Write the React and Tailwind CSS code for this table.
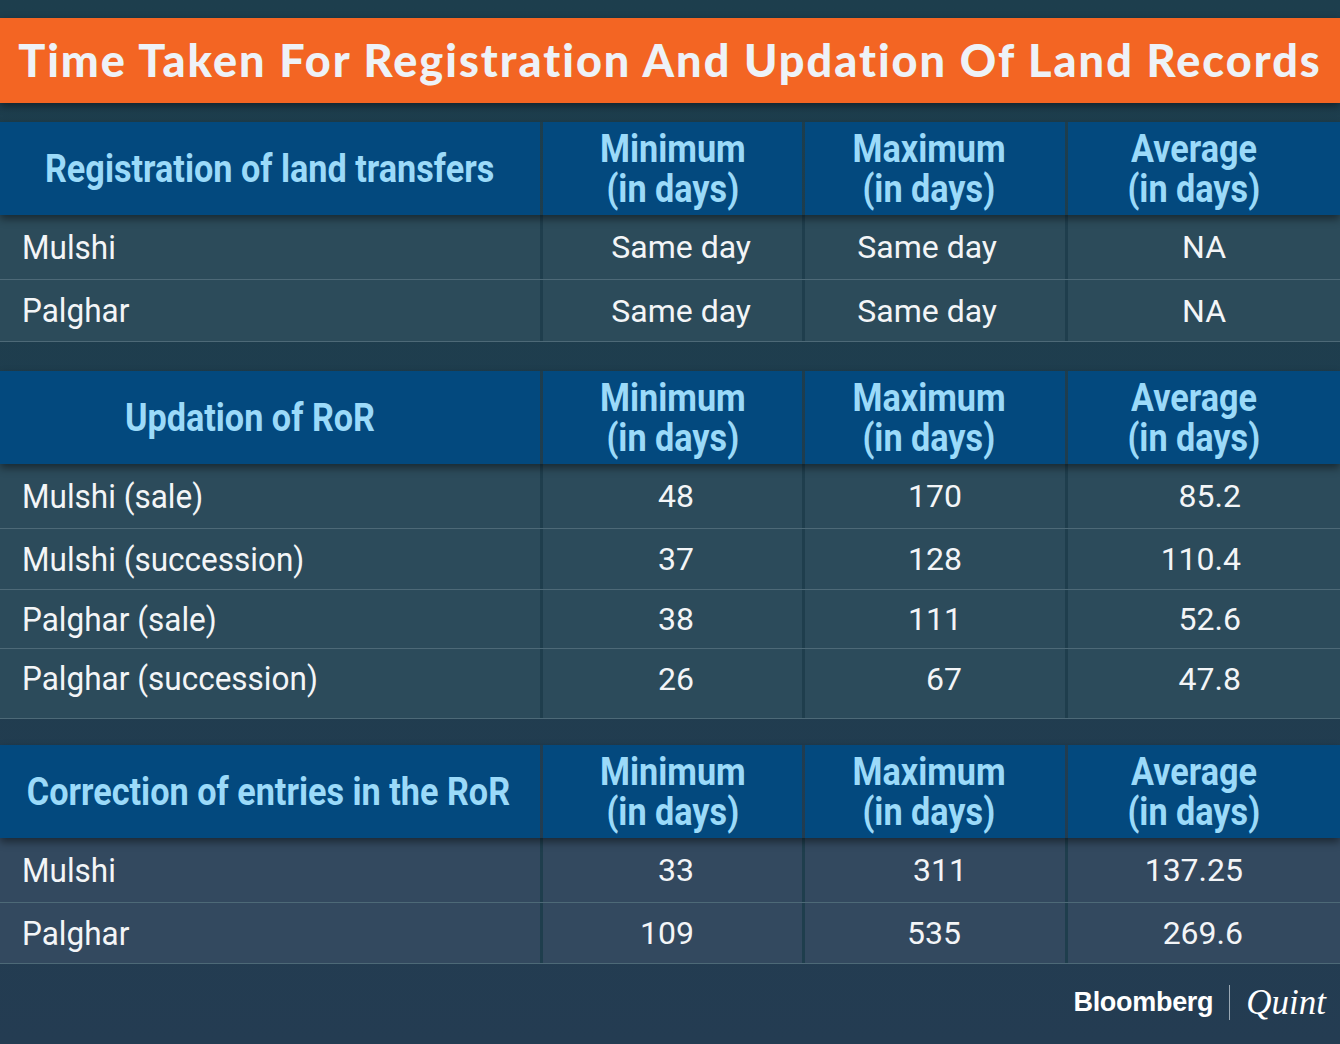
import React from "react";

const COLS = "grid grid-cols-[540px_259px_260px_1fr] gap-x-[3px]";

function HeaderRow({ title, shift = 0 }) {
  const sub = ["Minimum", "Maximum", "Average"];
  return (
    <div className={`${COLS} relative z-10 h-[93px] shadow-[0_4px_8px_rgba(0,0,0,0.45)]`}>
      <div
        className="bg-[#03497e] flex items-center justify-center text-[#9bdaf9] font-['Roboto'] font-bold text-[38px] leading-none"
        style={{ paddingRight: shift }}
      >
        <span className="inline-block scale-x-[0.9] whitespace-nowrap">{title}</span>
      </div>
      {sub.map((s, i) => (
        <div
          key={s}
          className={`bg-[#03497e] flex flex-col items-center justify-center text-[#9bdaf9] font-['Roboto'] font-bold text-[38px] leading-[40px] ${i === 2 ? "pr-[20px]" : i === 1 ? "pr-[12px]" : ""}`}
        >
          <span className="inline-block scale-x-[0.9] whitespace-nowrap">{s}</span>
          <span className="inline-block scale-x-[0.9] whitespace-nowrap">(in days)</span>
        </div>
      ))}
    </div>
  );
}

function DataRow({ label, vals, h, pads, bg, pb = 0 }) {
  return (
    <div
      className={`${COLS} bg-[#1f3e4d] border-b border-[#4d6977]`}
      style={{ height: h }}
    >
      <div className={`${bg} flex items-center pl-[22px] text-[#f3f5f7] font-['Roboto'] text-[33px] leading-none`} style={{ paddingBottom: pb }}>
        <span className="inline-block scale-x-[0.955] origin-left whitespace-nowrap">{label}</span>
      </div>
      {vals.map((v, i) => (
        <div
          key={i}
          className={`${bg} flex items-center justify-end text-[#f3f5f7] font-['Roboto'] text-[32px] leading-none`}
          style={{ paddingRight: pads[i], paddingBottom: pb }}
        >
          <span className="whitespace-nowrap">{v}</span>
        </div>
      ))}
    </div>
  );
}

export default function App() {
  const numPads = [108, 103, 99];
  return (
    <div className="w-[1340px] h-[1044px] overflow-hidden flex flex-col bg-gradient-to-b from-[#1d3e4d] via-[#1f3d4e] to-[#243c52]">
      <div className="h-[18px] shrink-0" />
      <div className="relative z-10 h-[85px] shrink-0 bg-[#f36523] flex items-center justify-center shadow-[0_3px_8px_rgba(0,0,0,0.45)]">
        <span className="font-['Lato'] font-black text-[45px] tracking-[2px] leading-none text-[#eef2f7] whitespace-nowrap">
          Time Taken For Registration And Updation Of Land Records
        </span>
      </div>
      <div className="h-[19px] shrink-0" />

      <HeaderRow title="Registration of land transfers" />
      <DataRow label="Mulshi" vals={["Same day", "Same day", "NA"]} h={65} pads={[51, 68, 114]} bg="bg-[#2c4b5a]" />
      <DataRow label="Palghar" vals={["Same day", "Same day", "NA"]} h={62} pads={[51, 68, 114]} bg="bg-[#2c4b5a]" />

      <div className="h-[29px] shrink-0" />

      <HeaderRow title="Updation of RoR" shift={40} />
      <DataRow label="Mulshi (sale)" vals={["48", "170", "85.2"]} h={65} pads={numPads} bg="bg-[#2c4b5b]" />
      <DataRow label="Mulshi (succession)" vals={["37", "128", "110.4"]} h={61} pads={numPads} bg="bg-[#2c4b5b]" />
      <DataRow label="Palghar (sale)" vals={["38", "111", "52.6"]} h={59} pads={numPads} bg="bg-[#2c4b5b]" />
      <DataRow label="Palghar (succession)" vals={["26", "67", "47.8"]} h={70} pads={numPads} bg="bg-[#2c4b5b]" pb={10} />

      <div className="h-[26px] shrink-0" />

      <HeaderRow title="Correction of entries in the RoR" shift={4} />
      <DataRow label="Mulshi" vals={["33", "311", "137.25"]} h={65} pads={[108, 98, 97]} bg="bg-[#33495f]" />
      <DataRow label="Palghar" vals={["109", "535", "269.6"]} h={61} pads={[108, 104, 97]} bg="bg-[#33495f]" />

      <div className="flex-1 flex items-center justify-end pr-[14px] pb-[4px]">
        <span className="font-['Liberation_Sans'] font-bold text-[27px] tracking-[-0.3px] text-white leading-none">
          Bloomberg
        </span>
        <span className="mx-[16px] w-px h-[35px] bg-[#9aa8b4]" />
        <span className="font-['Liberation_Serif'] italic text-[35px] text-white leading-none">
          Quint
        </span>
      </div>
    </div>
  );
}
